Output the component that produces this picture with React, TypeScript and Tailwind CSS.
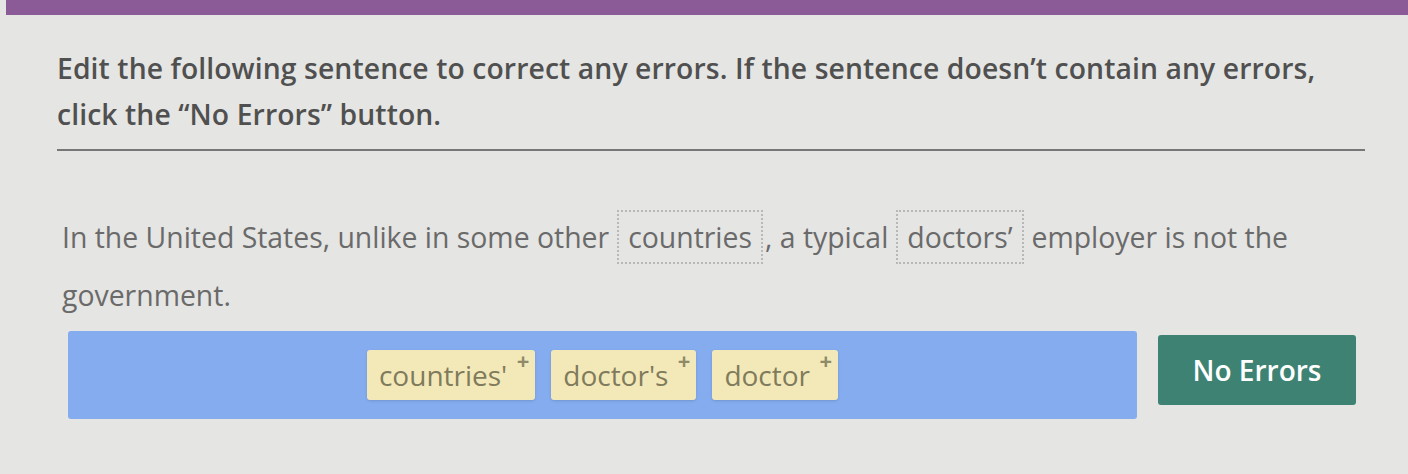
import React from 'react';

const chips = ["countries'", "doctor's", 'doctor'];

function Blank({ word, tight }: { word: string; tight?: boolean }) {
  return (
    <span
      className={
        tight
          ? 'inline-block border-2 border-dotted border-[#b8b8b8] px-[9px] leading-[50px] ml-[8px] mr-[2px]'
          : 'inline-block border-2 border-dotted border-[#b8b8b8] px-[9px] leading-[50px] mx-[8px]'
      }
    >
      {word}
    </span>
  );
}

export default function App() {
  return (
    <div className="w-[1408px] h-[474px] bg-[#e5e5e3] overflow-hidden font-['Open_Sans',sans-serif]">
      <div className="h-[15px] ml-[6px] bg-[#8b5b97]" />
      <div className="pl-[57px] pr-[43px] pt-[30px]">
        <h1 className="text-[28.3px] leading-[46px] font-semibold text-[#505050] tracking-[0.1px]">
          Edit the following sentence to correct any errors. If the sentence doesn’t contain any errors,
          <br />
          click the “No Errors” button.
        </h1>
        <div className="mt-[12px] h-[2px] bg-[#777]" />
        <p className="mt-[57px] pl-[5px] text-[28.4px] leading-[58px] text-[#6a6a6a]">
          In the United States, unlike in some other<Blank word="countries" tight />, a typical
          <Blank word="doctors’" />employer is not the
          <br />
          government.
        </p>
        <div className="mt-[7px] flex items-start gap-[21px] pl-[11px]">
          <div className="w-[1069px] h-[88px] bg-[#84acee] rounded-[3px] flex items-center justify-center gap-[16px]">
            {chips.map(c => (
              <div
                key={c}
                className="relative h-[50px] bg-[#f3e9b8] rounded-[3px] pl-[12px] pr-[28px] flex items-center text-[28px] text-[#7f7b5c] shadow-sm"
              >
                {c}
                <span className="absolute right-[6px] top-[-1px] text-[22px] font-bold leading-none text-[#8e8a6a]">+</span>
              </div>
            ))}
          </div>
          <button className="mt-[4px] w-[198px] h-[70px] bg-[#3e8274] rounded-[3px] text-white text-[28px] font-semibold">
            No Errors
          </button>
        </div>
      </div>
    </div>
  );
}
